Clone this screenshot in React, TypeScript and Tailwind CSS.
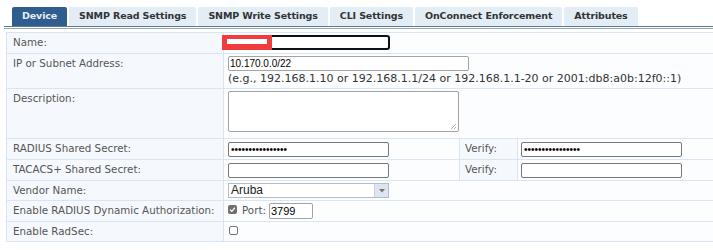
import React from "react";

const tabs = [
  "Device",
  "SNMP Read Settings",
  "SNMP Write Settings",
  "CLI Settings",
  "OnConnect Enforcement",
  "Attributes",
];

const labelFont = { fontFamily: '"DejaVu Sans", Verdana, sans-serif' };
const inputFont = { fontFamily: '"Liberation Sans", Arial, sans-serif' };

function Label({ children, h }: { children: React.ReactNode; h: string }) {
  return (
    <div
      className={`w-[217px] shrink-0 border-r border-[#d9e5f2] bg-[#f5f9fd] pl-[6px] pt-[2px] text-[10.3px] leading-[14px] text-[#555] ${h}`}
    >
      {children}
    </div>
  );
}

function Dots() {
  return (
    <span className="text-[10px] leading-[13px] tracking-[0px] text-black" style={inputFont}>
      ••••••••••••••••
    </span>
  );
}

export default function App() {
  return (
    <div className="h-[250px] w-[713px] overflow-hidden bg-white pt-[7px]" style={labelFont}>
      {/* Tabs */}
      <div className="flex h-[19px] gap-[2px] pl-[12px]">
        {tabs.map((t, i) => (
          <div
            key={t}
            className={
              i === 0
                ? "flex items-center rounded-t-[2px] bg-[#2f5d8e] px-[10px] text-[9.5px] font-bold tracking-[-0.13px] text-[#e4ecf5]"
                : "flex items-center rounded-t-[2px] bg-[#e2edf6] px-[10px] text-[9.5px] font-bold tracking-[-0.13px] text-[#333]"
            }
          >
            {t}
          </div>
        ))}
      </div>
      {/* Tab underline */}
      <div className="ml-[4px] h-[3px] border-t border-b border-t-[#5e7b90] border-b-[#93a8b8]" />
      <div className="h-[3px]" />
      {/* Form table */}
      <div className="ml-[6px] border-l border-t border-[#d9e5f2] bg-[#fcfdff]">
        {/* Name */}
        <div className="flex border-b border-[#d9e5f2]">
          <Label h="h-[20px]">Name:</Label>
          <div className="flex-1 pl-[4px] pt-[2px]">
            <div className="relative h-[15px] w-[162px] rounded-[3px] border-2 border-[#111] bg-white">
              <div className="absolute left-[-8px] top-[-2px] h-[15px] w-[50px] bg-[#f03c3c]">
                <div className="ml-[5px] mt-[4px] h-[5px] w-[40px] bg-white" />
              </div>
            </div>
          </div>
        </div>
        {/* IP */}
        <div className="flex border-b border-[#d9e5f2]">
          <Label h="h-[34px]">IP or Subnet Address:</Label>
          <div className="flex-1 pl-[4px] pt-[2px]">
            <div
              className="flex h-[15px] w-[241px] items-center rounded-[2px] border border-[#a3a3a3] bg-white pl-[1px] text-[10px] text-black"
              style={inputFont}
            >
              10.170.0.0/22
            </div>
            <div className="mt-[1px] whitespace-nowrap text-[11px] leading-[14px] text-[#333]">
              (e.g., 192.168.1.10 or 192.168.1.1/24 or 192.168.1.1-20 or 2001:db8:a0b:12f0::1)
            </div>
          </div>
        </div>
        {/* Description */}
        <div className="flex border-b border-[#d9e5f2]">
          <Label h="h-[49px]">Description:</Label>
          <div className="flex-1 pl-[4px] pt-[2px]">
            <div className="relative h-[41px] w-[231px] rounded-[2px] border border-[#a3a3a3] bg-white">
              <svg className="absolute bottom-[1px] right-[1px]" width="7" height="7" viewBox="0 0 7 7">
                <line x1="1" y1="6" x2="6" y2="1" stroke="#999" strokeWidth="0.8" />
                <line x1="4" y1="6" x2="6" y2="4" stroke="#999" strokeWidth="0.8" />
              </svg>
            </div>
          </div>
        </div>
        {/* RADIUS */}
        <div className="flex border-b border-[#d9e5f2]">
          <Label h="h-[20px]">RADIUS Shared Secret:</Label>
          <div className="w-[235px] shrink-0 pl-[4px] pt-[3px]">
            <div className="flex h-[15px] w-[161px] items-center rounded-[2px] border border-[#777] bg-white pl-[2px]">
              <Dots />
            </div>
          </div>
          <div className="w-[59px] shrink-0 border-l border-r border-[#d9e5f2] bg-[#f5f9fd] pl-[5px] pt-[2px] text-[10.3px] leading-[14px] text-[#555]">
            Verify:
          </div>
          <div className="flex-1 pl-[3px] pt-[3px]">
            <div className="flex h-[15px] w-[161px] items-center rounded-[2px] border border-[#777] bg-white pl-[2px]">
              <Dots />
            </div>
          </div>
        </div>
        {/* TACACS */}
        <div className="flex border-b border-[#d9e5f2]">
          <Label h="h-[20px]">TACACS+ Shared Secret:</Label>
          <div className="w-[235px] shrink-0 pl-[4px] pt-[3px]">
            <div className="h-[15px] w-[161px] rounded-[2px] border border-[#777] bg-white" />
          </div>
          <div className="w-[59px] shrink-0 border-l border-r border-[#d9e5f2] bg-[#f5f9fd] pl-[5px] pt-[2px] text-[10.3px] leading-[14px] text-[#555]">
            Verify:
          </div>
          <div className="flex-1 pl-[3px] pt-[3px]">
            <div className="h-[15px] w-[161px] rounded-[2px] border border-[#777] bg-white" />
          </div>
        </div>
        {/* Vendor */}
        <div className="flex border-b border-[#d9e5f2]">
          <Label h="h-[19px]">Vendor Name:</Label>
          <div className="flex-1 pl-[4px] pt-[2px]">
            <div className="flex h-[15px] w-[161px] items-center border border-[#b5bcc4] bg-white">
              <span className="flex-1 pl-[2px] text-[12px] leading-[13px] text-[#222]" style={inputFont}>
                Aruba
              </span>
              <div className="flex h-full w-[14px] items-center justify-center border-l border-[#c7d2de] bg-[#dde6f0]">
                <svg width="6" height="4" viewBox="0 0 6 4">
                  <path d="M0 0 L6 0 L3 3.5 Z" fill="#777" />
                </svg>
              </div>
            </div>
          </div>
        </div>
        {/* Dynamic auth */}
        <div className="flex border-b border-[#d9e5f2]">
          <Label h="h-[20px]">Enable RADIUS Dynamic Authorization:</Label>
          <div className="flex flex-1 items-start pl-[4px] pt-[2px]">
            <div className="mt-[2px] flex h-[9px] w-[9px] items-center justify-center rounded-[2px] bg-[#707070]">
              <svg width="7" height="7" viewBox="0 0 7 7">
                <path d="M1 3.6 L2.8 5.4 L6 1.6" fill="none" stroke="#fff" strokeWidth="1.3" />
              </svg>
            </div>
            <span className="ml-[5px] text-[10.3px] leading-[14px] text-[#555]">Port:</span>
            <div
              className="ml-[3px] flex h-[16px] w-[44px] items-center rounded-[2px] border border-[#a3a3a3] bg-white pl-[1px] text-[11px] text-black"
              style={inputFont}
            >
              3799
            </div>
          </div>
        </div>
        {/* RadSec */}
        <div className="flex border-b border-[#d9e5f2]">
          <Label h="h-[19px]">Enable RadSec:</Label>
          <div className="flex-1 pl-[5px] pt-[4px]">
            <div className="h-[9px] w-[9px] rounded-[2px] border border-[#777] bg-white" />
          </div>
        </div>
      </div>
    </div>
  );
}
